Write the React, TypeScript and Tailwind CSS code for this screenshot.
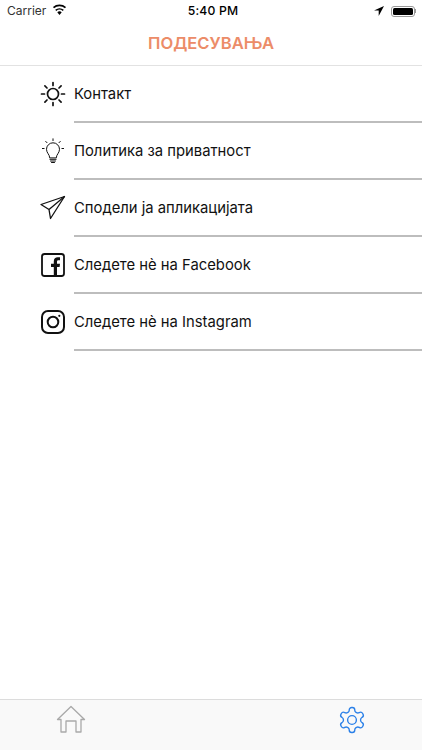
import React from "react";

function Sun() {
  return (
    <svg width="26" height="26" viewBox="0 0 26 26" fill="none" stroke="#111" strokeWidth="1.7" strokeLinecap="round">
      <circle cx="13" cy="13" r="5.5" />
      <path d="M13 1.5v3M13 21.5v3M1.5 13h3M21.5 13h3M4.9 4.9l2.1 2.1M19 19l2.1 2.1M4.9 21.1L7 19M19 7l2.1-2.1" />
    </svg>
  );
}
function Bulb() {
  return (
    <svg width="26" height="26" viewBox="0 0 26 26" fill="none" stroke="#111" strokeWidth="1" strokeLinecap="round" strokeLinejoin="round">
      <path d="M9.7 19.5c0-3-3.2-4.5-3.2-8.2a6.5 6.5 0 0 1 13 0c0 3.7-3.2 5.2-3.2 8.2z" />
      <path d="M9.9 21.3h6.2M10.5 23h5M11.5 24.5h3" />
      <path d="M13 .8v1.8M5.7 3.4l1.3 1.3M20.3 3.4L19 4.7M2.4 10.5h1.7M21.9 10.5h1.7" />
    </svg>
  );
}
function Send() {
  return (
    <svg width="26" height="26" viewBox="0 0 26 26" fill="none" stroke="#111" strokeWidth="1.3" strokeLinejoin="round">
      <path d="M1 9.5L24.5 1.5L10.5 23.5L9 14.5z" />
      <path d="M9 14.5L24.5 1.5" />
    </svg>
  );
}
function Facebook() {
  return (
    <svg width="26" height="26" viewBox="0 0 26 26" fill="none">
      <rect x="2" y="2" width="22" height="22" rx="2.5" stroke="#111" strokeWidth="1.8" />
      <path d="M14.3 24v-9h-2.8v-3.300h2.800V9.300c0-2.700 1.600-4.100 4-4.100h2.200v3.100h-1.500c-1.200 0-1.500.6-1.500 1.500v1.900h3l-.4 3.300h-2.600v9z" fill="#111" transform="translate(-.5 0)" />
    </svg>
  );
}
function Instagram() {
  return (
    <svg width="26" height="26" viewBox="0 0 26 26" fill="none" stroke="#111">
      <rect x="2" y="2" width="22" height="22" rx="6" strokeWidth="2" />
      <circle cx="13" cy="13" r="5.3" strokeWidth="2" />
      <circle cx="19.3" cy="6.8" r="1.1" fill="#111" stroke="none" />
    </svg>
  );
}

const rows = [
  { label: "Контакт", icon: <Sun /> },
  { label: "Политика за приватност", icon: <Bulb /> },
  { label: "Сподели ја апликацијата", icon: <Send /> },
  { label: "Следете нè на Facebook", icon: <Facebook /> },
  { label: "Следете нè на Instagram", icon: <Instagram /> },
];

export default function App() {
  return (
    <div className="w-[422px] h-[750px] bg-white flex flex-col overflow-hidden font-['Inter',sans-serif]">
      <div className="h-[22px] flex items-center justify-between pl-[7px] pr-[6px] text-black relative">
        <div className="flex items-center gap-[6px]">
          <span className="text-[12px] text-[#333]">Carrier</span>
          <svg width="15" height="11" viewBox="0 0 15 11" className="-mt-[3px]">
            <path d="M7.5 11L5.3 8.3a3.3 3.3 0 0 1 4.4 0z" fill="#000" />
            <path d="M3.7 6.4a5.7 5.7 0 0 1 7.6 0M1.5 3.7a9 9 0 0 1 12 0" fill="none" stroke="#000" strokeWidth="1.6" />
          </svg>
        </div>
        <span className="absolute left-[4px] right-0 text-center text-[12.2px] font-medium tracking-[0.2px]">5:40 PM</span>
        <div className="flex items-center gap-[7px]">
          <svg width="10" height="10" viewBox="0 0 10 10">
            <path d="M10 0L0 4.5h4.7V10z" fill="#000" />
          </svg>
          <div className="flex items-center">
            <div className="w-[24px] h-[11px] rounded-[3px] border border-[#999] p-[1px]">
              <div className="w-full h-full rounded-[1.5px] bg-black" />
            </div>
            <div className="w-[1px] h-[4px] bg-[#999]" />
          </div>
        </div>
      </div>

      <div className="h-[44px] flex items-center justify-center border-b border-[#e2e2e2] text-[16.6px] font-semibold text-[#ec8c68]">
        ПОДЕСУВАЊА
      </div>

      <div className="flex-1">
        {rows.map((r) => (
          <div key={r.label} className="h-[57px] pl-[40px] flex">
            <div className="w-[26px] h-[56px] flex items-center mr-[8px] shrink-0">{r.icon}</div>
            <div className="flex-1 h-[57px] pt-[2px] flex items-center border-b-2 border-[#bdbdbd] text-[14.8px] text-[#111]">
              {r.label}
            </div>
          </div>
        ))}
      </div>

      <div className="h-[51px] bg-[#f9f9f9] border-t border-[#dcdcdc] flex pt-[5px]">
        <div className="w-[141px] flex justify-center">
          <svg width="30" height="30" viewBox="0 0 30 30" fill="none" stroke="#a9a9a9" strokeWidth="1.3" strokeLinejoin="round">
            <path d="M1.5 14.5L15 1.5l13.5 13h-3.500v12.500h-5v-11h-10v11h-5V14.500z" />
          </svg>
        </div>
        <div className="flex-1" />
        <div className="w-[141px] flex justify-center">
          <svg width="30" height="30" viewBox="0 0 24 24" fill="none" stroke="#2b80e8" strokeWidth="1.1" strokeLinecap="round" strokeLinejoin="round">
            <path d="M12.220 2h-.44a2 2 0 0 0-2 2v.18a2 2 0 0 1-1 1.730l-.43.250a2 2 0 0 1-2 0l-.15-.08a2 2 0 0 0-2.730.730l-.22.380a2 2 0 0 0 .730 2.730l.15.100a2 2 0 0 1 1 1.720v.510a2 2 0 0 1-1 1.740l-.15.090a2 2 0 0 0-.730 2.730l.22.380a2 2 0 0 0 2.730.730l.15-.08a2 2 0 0 1 2 0l.43.250a2 2 0 0 1 1 1.730V20a2 2 0 0 0 2 2h.44a2 2 0 0 0 2-2v-.18a2 2 0 0 1 1-1.730l.43-.250a2 2 0 0 1 2 0l.15.080a2 2 0 0 0 2.730-.730l.22-.390a2 2 0 0 0-.730-2.730l-.15-.080a2 2 0 0 1-1-1.740v-.500a2 2 0 0 1 1-1.740l.15-.090a2 2 0 0 0 .730-2.730l-.22-.380a2 2 0 0 0-2.730-.730l-.15.080a2 2 0 0 1-2 0l-.43-.250a2 2 0 0 1-1-1.730V4a2 2 0 0 0-2-2z" />
            <circle cx="12" cy="12" r="3.5" />
          </svg>
        </div>
      </div>
    </div>
  );
}
